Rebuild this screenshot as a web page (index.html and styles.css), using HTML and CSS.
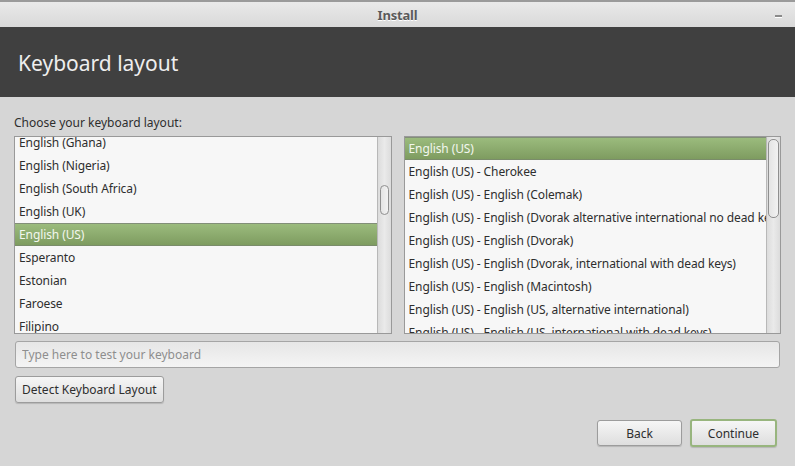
FILE: index.html
```
<!DOCTYPE html>
<html lang="en">
  <head>
    <meta charset="UTF-8" />
    <meta name="viewport" content="width=device-width, initial-scale=1.0" />
    <title>Install</title>
    <link rel="stylesheet" href="styles.css">
  </head>
  <body>
    <div class="window">
      <div class="titlebar">
        <span class="title">Install</span>
        <span class="minimize"></span>
      </div>
      <div class="header">Keyboard layout</div>

      <div class="content">
        <div class="label">Choose your keyboard layout:</div>
        <div class="lists">
          <div class="listbox">
            <div class="list-view">
              <ul class="list scrolled">
                <li>English (Ghana)</li>
                <li>English (Nigeria)</li>
                <li>English (South Africa)</li>
                <li>English (UK)</li>
                <li class="selected">English (US)</li>
                <li>Esperanto</li>
                <li>Estonian</li>
                <li>Faroese</li>
                <li>Filipino</li>
              </ul>
            </div>
            <div class="scrollbar">
              <div class="thumb thumb-left"></div>
            </div>
          </div>
          <div class="listbox">
            <div class="list-view">
              <ul class="list">
                <li class="selected">English (US)</li>
                <li>English (US) - Cherokee</li>
                <li>English (US) - English (Colemak)</li>
                <li>English (US) - English (Dvorak alternative international no dead keys)</li>
                <li>English (US) - English (Dvorak)</li>
                <li>English (US) - English (Dvorak, international with dead keys)</li>
                <li>English (US) - English (Macintosh)</li>
                <li>English (US) - English (US, alternative international)</li>
                <li>English (US) - English (US, international with dead keys)</li>
              </ul>
            </div>
            <div class="scrollbar">
              <div class="thumb thumb-right"></div>
            </div>
          </div>
        </div>

        <input class="test-input" type="text" placeholder="Type here to test your keyboard" />

        <div class="detect-row">
          <button class="btn btn-detect">Detect Keyboard Layout</button>
        </div>

        <div class="actions">
          <button class="btn btn-back">Back</button>
          <button class="btn btn-continue">Continue</button>
        </div>
      </div>
    </div>
  </body>
</html>
```

FILE: styles.css
```
body,
ul,
li {
  margin: 0;
  padding: 0;
}
ul {
  list-style: none;
}
body {
  font-family: "Noto Sans", "DejaVu Sans", sans-serif;
  font-size: 12px;
  color: #2e2e2e;
  background-color: #d6d6d6;
}
.window {
  width: 795px;
  height: 466px;
  display: flex;
  flex-direction: column;
  overflow: hidden;
}

/* title bar */
.titlebar {
  height: 27px;
  flex-shrink: 0;
  display: flex;
  align-items: center;
  justify-content: center;
  position: relative;
  background: linear-gradient(#e9e9e9, #d9d9d9);
  border-top: 2px solid #9a9a9a;
  box-sizing: border-box;
}
.titlebar .title {
  font-weight: bold;
  font-size: 13px;
  color: #5a5a5a;
  text-shadow: 0 1px 0 #fff;
  letter-spacing: -0.2px;
}
.titlebar .minimize {
  position: absolute;
  right: 13px;
  top: 13px;
  width: 7px;
  height: 2px;
  background-color: #8a8a8a;
  border-bottom: 1px solid #fff;
}

/* dark header */
.header {
  height: 70px;
  flex-shrink: 0;
  background-color: #404040;
  color: #eeeeee;
  font-size: 21px;
  line-height: 72px;
  padding-left: 18px;
  box-sizing: border-box;
}

.content {
  flex: 1;
  display: flex;
  flex-direction: column;
  padding: 17px 14px 0 14px;
}
.label {
  line-height: 18px;
  height: 18px;
  margin-bottom: 4px;
}

/* lists */
.lists {
  display: flex;
  gap: 12px;
  height: 198px;
}
.listbox {
  flex: 1;
  display: flex;
  border: 1px solid #999;
  background-color: #f7f7f7;
  overflow: hidden;
}
.list-view {
  flex: 1;
  overflow: hidden;
  min-width: 0;
}
.list li {
  height: 23px;
  line-height: 23px;
  padding-left: 4px;
  letter-spacing: -0.1px;
  white-space: nowrap;
  overflow: hidden;
}
.list.scrolled {
  margin-top: -6px;
}
.list li.selected {
  background: linear-gradient(#9bbb7d, #7e9c60);
  color: #f2f7ee;
  border-top: 1px solid #828f78;
  border-bottom: 1px solid #7a8c6a;
  height: 21px;
  line-height: 21px;
}
.scrollbar {
  width: 13px;
  flex-shrink: 0;
  border-left: 1px solid #b8b8b8;
  background: linear-gradient(to right, #dcdcdc, #eaeaea 50%, #dcdcdc);
  display: flex;
  flex-direction: column;
  align-items: center;
}
.thumb {
  width: 9px;
  border: 1px solid #8f8f8f;
  border-radius: 5px;
  box-sizing: border-box;
  background: linear-gradient(to right, #e4e4e4, #f2f2f2);
}
.thumb-left {
  margin-top: 48px;
  height: 30px;
}
.thumb-right {
  margin-top: 2px;
  height: 79px;
  width: 11px;
}

/* input */
.test-input {
  margin: 7px 0 0 1px;
  width: 765px;
  height: 27px;
  box-sizing: border-box;
  border: 1px solid #a5a5a5;
  border-radius: 3px;
  background: linear-gradient(#e6e6e6, #f4f4f4);
  font-family: "Noto Sans", "DejaVu Sans", sans-serif;
  font-size: 12px;
  padding: 0 6px;
  color: #333;
}
.test-input::placeholder {
  color: #8e8e8e;
}

/* buttons */
.btn {
  font-family: "Noto Sans", "DejaVu Sans", sans-serif;
  font-size: 12px;
  color: #2e2e2e;
  height: 27px;
  border: 1px solid #9c9c9c;
  border-radius: 3px;
  background: linear-gradient(#f6f6f6, #dedede);
  box-shadow: 0 1px 1px rgba(0, 0, 0, 0.15);
  padding: 0 7px;
}
.btn-detect {
  padding: 0 6px;
}
.detect-row {
  margin: 8px 0 0 1px;
}
.actions {
  display: flex;
  justify-content: flex-end;
  gap: 8px;
  margin-top: 16px;
  padding-right: 4px;
}
.btn-back {
  width: 85px;
  height: 26px;
  margin-top: 1px;
}
.btn-continue {
  width: 87px;
  height: 28px;
  border: 2px solid #98b57e;
}
```
